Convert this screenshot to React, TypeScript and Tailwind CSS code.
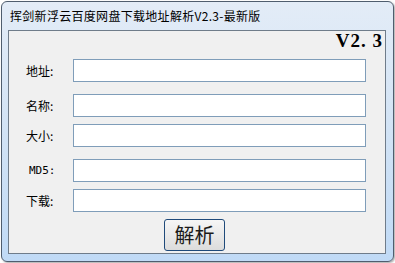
import React from "react";

const cjk = { fontFamily: '"Noto Sans CJK SC", "Microsoft YaHei", sans-serif' };

function Row({ label, mt, mono }: { label: string; mt: string; mono?: boolean }) {
  return (
    <div className={`flex items-center h-[23px] ${mt}`}>
      <div
        className={`w-[64px] text-[12px] leading-none text-black ${mono ? "pl-[20px]" : "pl-[17px]"}`}
        style={mono ? { fontFamily: '"DejaVu Sans Mono", monospace', fontSize: "11px" } : cjk}
      >
        {label}
      </div>
      <div className="w-[293px] h-[23px] border border-[#7f9db9] bg-white" />
    </div>
  );
}

export default function App() {
  return (
    <div className="w-[395px] h-[263px] bg-white relative overflow-hidden">
      <div className="absolute left-[1px] top-[1px] w-[393px] h-[261px] rounded-[6px] border border-[#4f5d6e] bg-gradient-to-b from-[#e3ecf7] via-[#d2e3f5] to-[#c0daf6] flex flex-col shadow-[1px_1px_2px_rgba(0,0,0,0.35)]">
        <div className="h-[28px] pl-[8px] flex items-center text-[12px] tracking-[0.3px] text-black" style={cjk}>
          挥剑新浮云百度网盘下载地址解析V2.3-最新版
        </div>
        <div className="ml-[6px] mr-[7px] mb-[7px] flex-1 border border-[#6f7c8a] bg-[#f0f0f0] flex flex-col">
          <div
            className="h-[28px] flex justify-end pr-[2px] pt-[0px] text-[19px] leading-[20px] tracking-[1px] text-black"
            style={{ fontFamily: '"Liberation Serif", "Times New Roman", serif', fontWeight: 700 }}
          >
            V2. 3
          </div>
          <Row label="地址:" mt="mt-0" />
          <Row label="名称:" mt="mt-[12px]" />
          <Row label="大小:" mt="mt-[7px]" />
          <Row label="MD5:" mt="mt-[12px]" mono />
          <Row label="下载:" mt="mt-[7px]" />
          <div className="flex mt-[7px] pl-[155px]">
            <button
              className="w-[61px] h-[32px] rounded-[3px] border border-[#1f4a7a] bg-gradient-to-b from-[#f6f6f6] to-[#dcdcdc] text-[20px] leading-none text-[#1a1a1a] flex items-center justify-center"
              style={cjk}
            >
              解析
            </button>
          </div>
        </div>
      </div>
    </div>
  );
}
